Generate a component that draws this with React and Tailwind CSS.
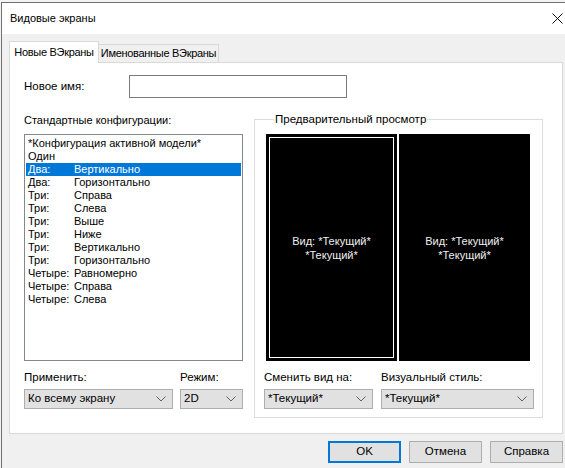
import React, { useState } from "react";

const font = { fontFamily: '"Liberation Sans", Arial, sans-serif' };

const configs = [
  ["*Конфигурация активной модели*", ""],
  ["Один", ""],
  ["Два:", "Вертикально"],
  ["Два:", "Горизонтально"],
  ["Три:", "Справа"],
  ["Три:", "Слева"],
  ["Три:", "Выше"],
  ["Три:", "Ниже"],
  ["Три:", "Вертикально"],
  ["Три:", "Горизонтально"],
  ["Четыре:", "Равномерно"],
  ["Четыре:", "Справа"],
  ["Четыре:", "Слева"],
];

const Chevron = () => (
  <svg width="10" height="6" viewBox="0 0 10 6" className="shrink-0">
    <path d="M0.5 0.5L5 5L9.5 0.5" fill="none" stroke="#606060" strokeWidth="1" />
  </svg>
);

const Combo = ({ value, width }) => (
  <div
    className={`${width} h-[20px] bg-[#e1e1e1] border border-[#adadad] flex items-center justify-between pl-[3px] pr-[6px] text-[11.5px] text-black`}
  >
    <span className="whitespace-nowrap">{value}</span>
    <Chevron />
  </div>
);

const Pane = ({ active }) => (
  <div className={`w-[131px] h-full bg-black ${active ? "p-[3px]" : ""}`}>
    <div
      className={`h-full flex flex-col items-center justify-center text-[11px] leading-[14px] text-[#f0f0f0] ${
        active ? "border border-white" : ""
      }`}
    >
      <span>Вид: *Текущий*</span>
      <span>*Текущий*</span>
    </div>
  </div>
);

export default function App() {
  const [selected, setSelected] = useState(2);

  return (
    <div className="w-[565px] h-[468px] overflow-hidden bg-[#f3f3f3] pt-[2px] pl-[1px]" style={font}>
      <div className="w-[600px] h-[500px] border-l border-t border-[#707070]">
        {/* Title bar */}
        <div className="h-[31px] bg-white flex items-center justify-between pl-[8px] pr-[38px]">
          <span className="text-[11px] text-black">Видовые экраны</span>
          <svg width="11" height="11" viewBox="0 0 11 11">
            <path d="M0.5 0.5L10.5 10.5M10.5 0.5L0.5 10.5" stroke="#111" strokeWidth="1" />
          </svg>
        </div>

        {/* Body */}
        <div className="bg-[#f0f0f0] h-[470px] pl-[7px] pt-[7px]">
          {/* Tabs */}
          <div className="flex items-start h-[22px] relative z-10">
            <div className="w-[90px] h-[22px] bg-white border border-b-0 border-[#d9d9d9] flex items-center justify-center text-[11px] tracking-[-0.3px] text-black whitespace-nowrap">
              Новые ВЭкраны
            </div>
            <div className="mt-[3px] w-[120px] h-[18px] bg-[#f0f0f0] border border-l-0 border-b-0 border-[#d9d9d9] flex items-center justify-center text-[11px] tracking-[-0.3px] text-black whitespace-nowrap">
              Именованные ВЭкраны
            </div>
          </div>

          {/* Panel */}
          <div className="-mt-[1px] w-[554px] h-[372px] bg-white border border-[#d9d9d9] pl-[14px]">
            <div className="flex items-center mt-[12px] h-[23px]">
              <span className="w-[105px] text-[11.5px] text-black">Новое имя:</span>
              <div className="w-[218px] h-[23px] border border-[#7a7a7a] bg-white" />
            </div>

            <div className="flex mt-[15px]">
              {/* Left column */}
              <div className="w-[219px]">
                <div className="h-[14px] leading-[14px] text-[11px] text-black whitespace-nowrap">
                  Стандартные конфигурации:
                </div>
                <div className="mt-[7px] h-[227px] border border-[#828790] bg-white pt-[2px] px-[1px]">
                  {configs.map(([a, b], i) => (
                    <div
                      key={i}
                      onClick={() => setSelected(i)}
                      className={`flex h-[13px] leading-[13px] text-[11px] pl-[2px] ${
                        selected === i ? "bg-[#0078d7] text-white" : "text-black"
                      }`}
                    >
                      {b ? (
                        <>
                          <span className="w-[46px] shrink-0 whitespace-nowrap">{a}</span>
                          <span className="whitespace-nowrap">{b}</span>
                        </>
                      ) : (
                        <span className="whitespace-nowrap">{a}</span>
                      )}
                    </div>
                  ))}
                </div>
                <div className="mt-[9px] h-[14px] leading-[14px] flex text-[11.5px] text-black">
                  <span className="w-[156px]">Применить:</span>
                  <span>Режим:</span>
                </div>
                <div className="mt-[5px] flex gap-[7px]">
                  <Combo value="Ко всему экрану" width="w-[149px]" />
                  <Combo value="2D" width="w-[63px]" />
                </div>
              </div>

              {/* Preview group */}
              <fieldset className="ml-[11px] -mt-[1px] w-[289px] h-[306px] border border-[#dcdcdc] pl-[11px] pb-[8px]">
                <legend className="ml-[8px] px-[1px] text-[11.5px] leading-[14px] text-black whitespace-nowrap">
                  Предварительный просмотр
                </legend>
                <div className="mt-[8px] w-[264px] h-[227px] flex gap-[2px]">
                  <Pane active />
                  <Pane />
                </div>
                <div className="mt-[9px] -ml-[2px] h-[14px] leading-[14px] flex text-[11.5px] text-black">
                  <span className="w-[117px]">Сменить вид на:</span>
                  <span>Визуальный стиль:</span>
                </div>
                <div className="mt-[5px] -ml-[2px] flex gap-[8px]">
                  <Combo value="*Текущий*" width="w-[109px]" />
                  <Combo value="*Текущий*" width="w-[153px]" />
                </div>
              </fieldset>
            </div>
          </div>

          {/* Buttons */}
          <div className="flex gap-[8px] ml-[319px] mt-[7px]">
            <button className="w-[73px] h-[22px] bg-[#e1e1e1] border-2 border-[#0078d7] text-[11.5px] text-black">
              OK
            </button>
            <button className="w-[73px] h-[22px] bg-[#e1e1e1] border border-[#adadad] text-[11.5px] text-black">
              Отмена
            </button>
            <button className="w-[73px] h-[22px] bg-[#e1e1e1] border border-[#adadad] text-[11.5px] text-black">
              Справка
            </button>
          </div>
        </div>
      </div>
    </div>
  );
}
